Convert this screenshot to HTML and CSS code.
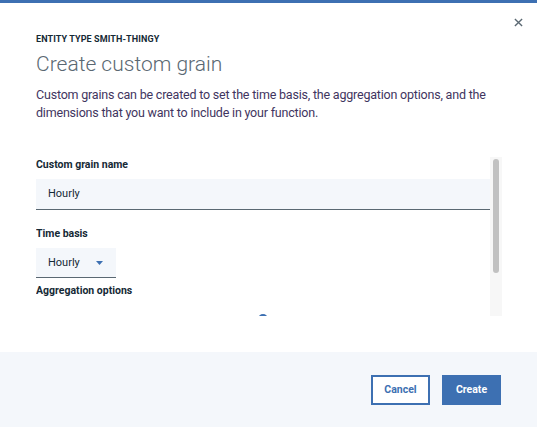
FILE: index.html
```html
<!DOCTYPE html>
<html lang="en">
<head>
<meta charset="utf-8">
<title>Create custom grain</title>
<link rel="stylesheet" href="styles.css">
</head>
<body>
<div class="modal">
  <header class="modal-header">
    <button class="close" aria-label="Close">
      <svg width="9" height="9" viewBox="0 0 10 10"><path d="M1 1 L9 9 M9 1 L1 9" stroke="#5a6872" stroke-width="1.5" fill="none"/></svg>
    </button>
    <p class="eyebrow">ENTITY TYPE SMITH-THINGY</p>
    <h1 class="title">Create custom grain</h1>
    <p class="desc">Custom grains can be created to set the time basis, the aggregation options, and the dimensions that you want to include in your function.</p>
  </header>
  <div class="body">
    <div class="scroll">
      <div class="field">
        <label class="label">Custom grain name</label>
        <div class="input">Hourly</div>
      </div>
      <div class="field">
        <label class="label">Time basis</label>
        <div class="select">Hourly
          <svg class="caret" width="7" height="4" viewBox="0 0 7 4"><path d="M0 0 L7 0 L3.5 4 Z" fill="#3d70b2"/></svg>
        </div>
      </div>
      <div class="field agg">
        <label class="label">Aggregation options</label>
        <div class="dot-row"><span class="dot"></span></div>
      </div>
    </div>
    <div class="track"><div class="thumb"></div></div>
  </div>
  <footer class="footer">
    <button class="btn btn-secondary">Cancel</button>
    <button class="btn btn-primary">Create</button>
  </footer>
</div>
</body>
</html>
```
FILE: styles.css
```css
* { box-sizing: border-box; }
html, body { margin: 0; padding: 0; background: #fff; }
body {
  font-family: Roboto, "Noto Sans", sans-serif;
  color: #152935;
  width: 537px;
  height: 427px;
  overflow: hidden;
}
.modal {
  height: 427px;
  border-top: 3px solid #3d70b2;
  display: flex;
  flex-direction: column;
}
.modal-header {
  position: relative;
  padding: 30px 36px 0 36px;
}
.close {
  position: absolute;
  right: 14px;
  top: 15px;
  background: none;
  border: 0;
  padding: 0;
  width: 9px;
  height: 9px;
  display: flex;
}
.eyebrow {
  margin: 0;
  font-size: 9px;
  font-weight: 700;
  line-height: 12px;
  letter-spacing: 0.1px;
  color: #152935;
}
.title {
  margin: 6px 0 0 0;
  font-family: Roboto, "Noto Sans", sans-serif;
  font-size: 21px;
  font-weight: 300;
  line-height: 26px;
  color: #5a6872;
}
.desc {
  margin: 9px 0 0 0;
  font-size: 12.5px;
  letter-spacing: -0.2px;
  line-height: 18px;
  color: #3f3560;
}
.body {
  display: flex;
  padding: 0 35px 0 36px;
  margin-top: 35px;
}
.scroll {
  flex: 1;
  height: 159px;
  overflow: hidden;
  padding-top: 1px;
}
.field { display: flex; flex-direction: column; }
.label {
  font-size: 10.5px;
  font-weight: 700;
  line-height: 14px;
  color: #152935;
}
.input {
  margin-top: 7px;
  height: 31px;
  background: #f4f7fb;
  border-bottom: 1px solid #5a6872;
  padding: 0 12px;
  font-size: 11px;
  line-height: 30px;
  color: #152935;
}
.field + .field { margin-top: 17px; }
.select {
  margin-top: 7px;
  width: 80px;
  height: 30px;
  background: #f4f7fb;
  border-bottom: 1px solid #5a6872;
  padding: 0 12px;
  font-size: 11px;
  line-height: 29px;
  color: #152935;
  display: flex;
  align-items: center;
  justify-content: space-between;
}
.caret { margin-right: 1px; }
.field.agg { margin-top: 6px; }
.dot-row {
  display: flex;
  justify-content: center;
  padding-top: 16px;
}
.dot {
  width: 10px;
  height: 10px;
  border-radius: 50%;
  background: #3d70b2;
}
.track {
  width: 12px;
  height: 159px;
  background: #f7f7f7;
  padding: 2px 3px 0 3px;
}
.thumb {
  width: 6px;
  height: 114px;
  border-radius: 3px;
  background: #c1c1c1;
}
.footer {
  margin-top: auto;
  height: 75px;
  background: #f4f7fb;
  display: flex;
  justify-content: flex-end;
  align-items: center;
  gap: 12px;
  padding: 0 36px 0 0;
}
.btn {
  height: 30px;
  width: 59px;
  font-family: Roboto, "Noto Sans", sans-serif;
  font-size: 10.5px;
  font-weight: 700;
  padding: 0;
  cursor: pointer;
}
.btn-secondary {
  background: #fff;
  border: 2px solid #3d70b2;
  color: #3d70b2;
}
.btn-primary {
  background: #3d70b2;
  border: 2px solid #3d70b2;
  color: #fff;
}
```
